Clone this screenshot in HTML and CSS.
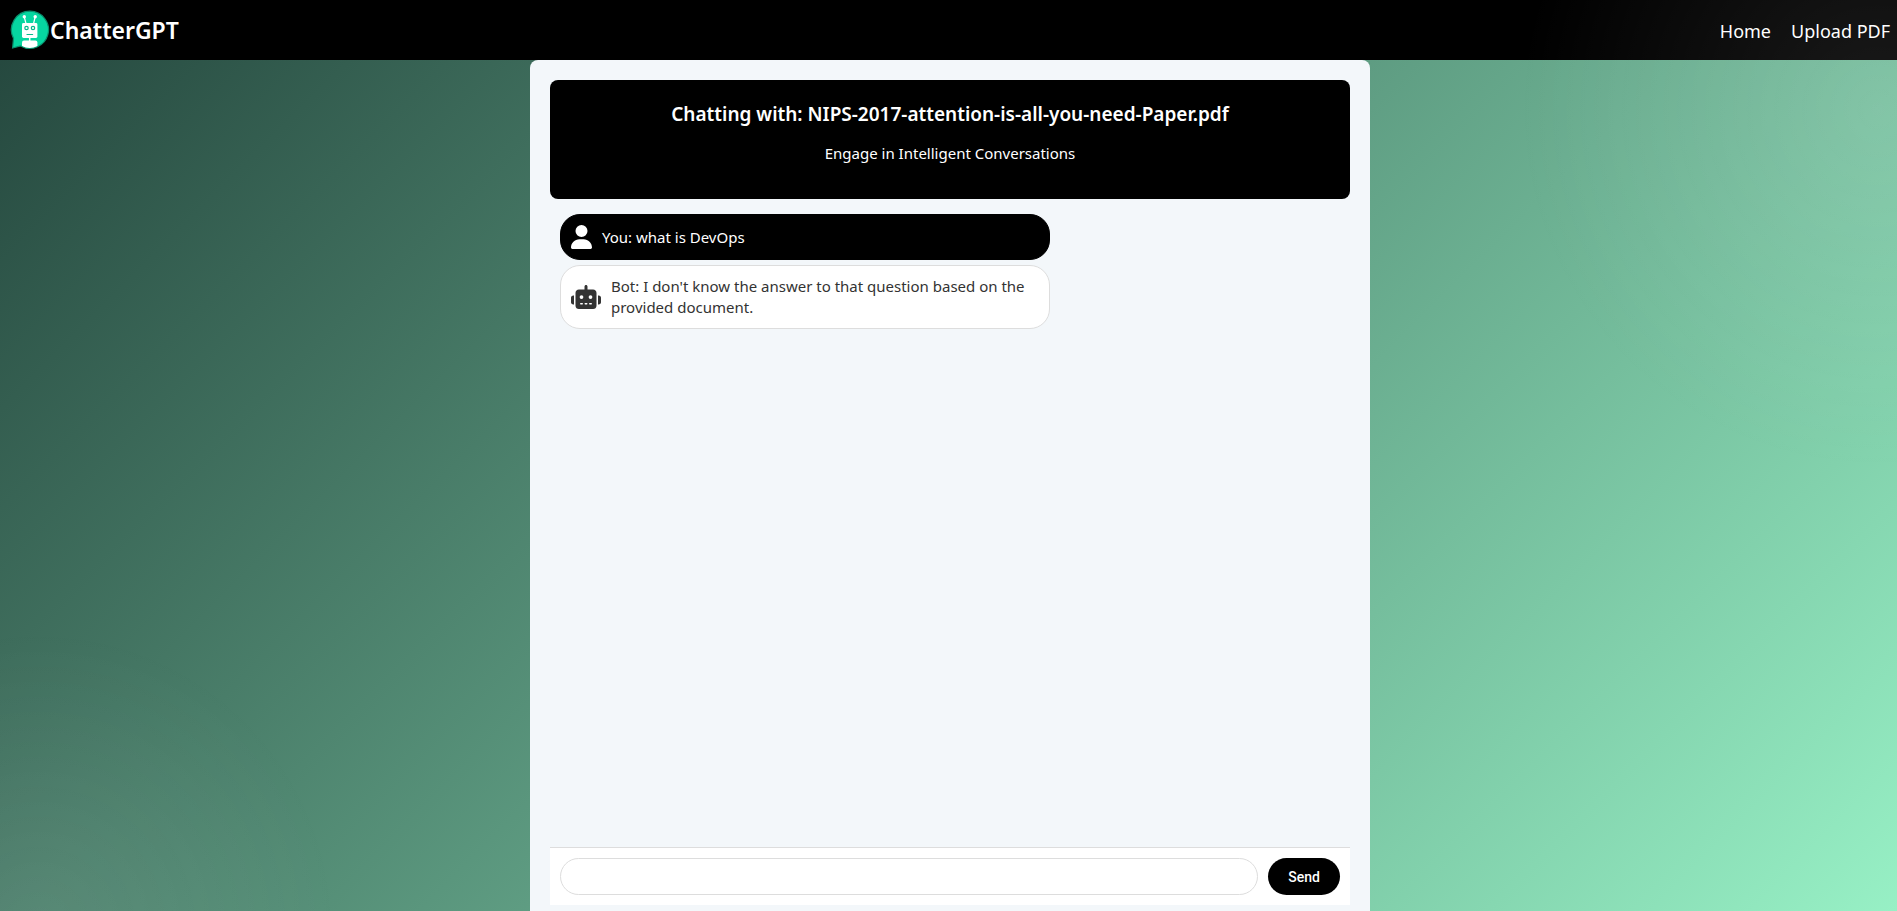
FILE: index.html
```html
<!DOCTYPE html>
<html lang="en">
<head>
<meta charset="utf-8">
<title>ChatterGPT</title>
<link rel="stylesheet" href="styles.css">
</head>
<body>
<header class="navbar">
  <a class="brand" href="#">
    <svg class="brand-logo" viewBox="0 0 40 40" aria-hidden="true">
      <path d="M20 1.2a18.6 18.6 0 1 1-9.4 34.7L2.6 38l.9-9.6A18.6 18.6 0 0 1 20 1.2z" fill="#06d6a0" stroke="#0a8e6c" stroke-width="1.2"/>
      <g fill="none" stroke="#fff" stroke-width="1.2" stroke-linecap="round">
        <path d="M14.4 7.5l1.6 6M25 7.5l-1.4 6"/>
        <path d="M19.7 27v5" stroke-width="1.5"/>
      </g>
      <g fill="#fff">
        <circle cx="14.3" cy="6.8" r="1.7"/>
        <circle cx="25.2" cy="6.8" r="1.7"/>
        <rect x="12" y="13" width="15.4" height="15" rx="1.4"/>
        <path d="M14 30.5h11.4a2 2 0 0 1 2 2v3.6c-4.600 2.500-10.800 2.500-15.400 0v-3.600a2 2 0 0 1 2-2z"/>
      </g>
      <g fill="none" stroke="#06b98b" stroke-width="1.2">
        <circle cx="16.500" cy="18" r="1.700"/>
        <circle cx="23" cy="18" r="1.700"/>
        <path d="M17 24.500h5.600" stroke-linecap="round"/>
      </g>
    </svg>
    <span>ChatterGPT</span>
  </a>
  <nav class="nav-links">
    <a href="#">Home</a>
    <a href="#">Upload PDF</a>
  </nav>
</header>
<main class="page">
  <section class="chat">
    <header class="chat-header">
      <h1>Chatting with: NIPS-2017-attention-is-all-you-need-Paper.pdf</h1>
      <p>Engage in Intelligent Conversations</p>
    </header>
    <div class="messages">
      <div class="message user">
        <svg class="icon" viewBox="0 0 448 512" aria-hidden="true"><path d="M224 256A128 128 0 1 0 224 0a128 128 0 1 0 0 256zm-45.700 48C79.800 304 0 383.800 0 482.300C0 498.700 13.300 512 29.700 512H418.300c16.400 0 29.700-13.300 29.700-29.700C448 383.800 368.200 304 269.700 304H178.300z"/></svg>
        <p>You: what is DevOps</p>
      </div>
      <div class="message bot">
        <svg class="icon" viewBox="0 0 640 512" aria-hidden="true"><path d="M320 0c17.700 0 32 14.300 32 32V96H472c39.800 0 72 32.200 72 72V440c0 39.800-32.200 72-72 72H168c-39.800 0-72-32.200-72-72V168c0-39.800 32.200-72 72-72H288V32c0-17.700 14.300-32 32-32zM208 384c-8.800 0-16 7.200-16 16s7.200 16 16 16h32c8.800 0 16-7.200 16-16s-7.200-16-16-16H208zm96 0c-8.800 0-16 7.200-16 16s7.200 16 16 16h32c8.800 0 16-7.200 16-16s-7.200-16-16-16H304zm96 0c-8.800 0-16 7.200-16 16s7.200 16 16 16h32c8.800 0 16-7.200 16-16s-7.200-16-16-16H400zM264 256a40 40 0 1 0 -80 0 40 40 0 1 0 80 0zm152 40a40 40 0 1 0 0-80 40 40 0 1 0 0 80zM48 224H64V416H48c-26.500 0-48-21.500-48-48V272c0-26.500 21.500-48 48-48zm544 0c26.500 0 48 21.500 48 48v96c0 26.500-21.500 48-48 48H576V224h16z"/></svg>
        <p>Bot: I don't know the answer to that question based on the provided document.</p>
      </div>
    </div>
    <form class="composer">
      <input type="text" aria-label="Message">
      <button type="button">Send</button>
    </form>
  </section>
</main>
</body>
</html>
```
FILE: styles.css
```css
* {
  box-sizing: border-box;
}

body {
  margin: 0;
  height: 100vh;
  display: flex;
  flex-direction: column;
  overflow: hidden;
  background: linear-gradient(135deg, #23453c, #97f0c5);
  font-family: "Noto Sans", "Open Sans", sans-serif;
}

/* soft light in two corners, above the bar and behind the chat */
body::before {
  content: "";
  position: fixed;
  inset: 0;
  z-index: 1;
  pointer-events: none;
  background:
    radial-gradient(circle 360px at 99% 12%, rgba(255, 255, 255, 0.1), transparent),
    radial-gradient(circle 300px at 2% 102%, rgba(255, 255, 255, 0.08), transparent);
}

.navbar {
  display: flex;
  align-items: center;
  justify-content: space-between;
  height: 60px;
  padding: 0 7px 0 10px;
  background: #000;
}

.navbar a {
  color: #fff;
  text-decoration: none;
}

.brand {
  display: flex;
  align-items: center;
  font-size: 23px;
  font-weight: 600;
}

.brand-logo {
  width: 40px;
  height: 40px;
}

.nav-links {
  display: flex;
  gap: 20px;
  padding-top: 2px;
  font-size: 18px;
}

.page {
  flex: 1;
  display: flex;
  justify-content: center;
  min-height: 0;
  padding-left: 3px;
}

.chat {
  position: relative;
  z-index: 2;
  display: flex;
  flex-direction: column;
  width: 100%;
  max-width: 840px;
  padding: 20px 20px 6px;
  border-radius: 8px 8px 0 0;
  background: #f3f7fa;
}

.chat-header {
  padding: 20px 20px 35px;
  border-radius: 8px;
  background: #000;
  color: #fff;
  text-align: center;
}

.chat-header h1 {
  margin: 0 0 15px;
  font-size: 19px;
  font-weight: 600;
  line-height: 28px;
}

.chat-header p {
  margin: 0;
  font-size: 15px;
  line-height: 21px;
}

.messages {
  flex: 1;
  display: flex;
  flex-direction: column;
  gap: 5px;
  min-height: 0;
  padding: 15px 10px;
}

.message {
  display: flex;
  align-items: center;
  gap: 10px;
  width: 490px;
  max-width: 100%;
  padding: 10px;
  border: 1px solid #ddd;
  border-radius: 20px;
  font-size: 15px;
  line-height: 21px;
}

.message p {
  margin: 0;
}

.message .icon {
  flex: none;
  height: 24px;
  fill: currentColor;
}

.user {
  border-color: #000;
  background: #000;
  color: #fff;
}

.bot {
  background: #fff;
  color: #333;
}

.composer {
  display: flex;
  gap: 10px;
  padding: 10px;
  border-top: 1px solid #ddd;
  background: #fff;
}

.composer input {
  flex: 1;
  min-width: 0;
  height: 37px;
  padding: 0 10px;
  border: 1px solid #ddd;
  border-radius: 20px;
  font-size: 15px;
}

.composer button {
  padding: 0 20px;
  border: 0;
  border-radius: 20px;
  background: #000;
  color: #fff;
  font-family: Roboto, "Liberation Sans", sans-serif;
  font-size: 14px;
  font-weight: 500;
}
```
